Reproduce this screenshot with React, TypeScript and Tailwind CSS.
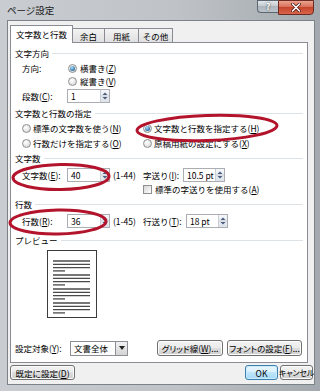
import React from "react";

function U({ children }: { children: React.ReactNode }) {
  return <span className="underline underline-offset-1">{children}</span>;
}

function Radio({ checked }: { checked?: boolean }) {
  return (
    <span className="relative inline-block h-[9px] w-[9px] shrink-0 rounded-full border border-[#8e8f8f] bg-[radial-gradient(circle_at_40%_35%,#ffffff,#e2e2e2_65%,#c9c9c9)]">
      {checked && (
        <span className="absolute left-[1px] top-[1px] h-[5px] w-[5px] rounded-full bg-[radial-gradient(circle_at_40%_35%,#b4e2fa,#2f76ad_65%,#1a4a76)]" />
      )}
    </span>
  );
}

function Check() {
  return (
    <span className="inline-block h-[9px] w-[9px] shrink-0 border border-[#8e8f8f] bg-[linear-gradient(135deg,#d6d6d6,#ffffff)]" />
  );
}

function SpinArrows() {
  return (
    <span className="flex h-full w-[9px] shrink-0 flex-col border-l border-[#c9ced6] bg-[linear-gradient(#f5f7fa,#dde3ea)]">
      <svg width="8" height="12" viewBox="0 0 8 12">
        <path d="M1.5 5 L4 2.5 L6.5 5Z" fill="#4b5d7d" />
        <line x1="0" y1="6" x2="8" y2="6" stroke="#c9ced6" strokeWidth="1" />
        <path d="M1.5 7 L4 9.5 L6.5 7Z" fill="#4b5d7d" />
      </svg>
    </span>
  );
}

function Spin({ value, className }: { value: string; className: string }) {
  return (
    <div className={`flex h-[14px] items-stretch border border-[#abadb3] bg-white ${className}`}>
      <span className="flex flex-1 items-center pl-[3px]">{value}</span>
      <SpinArrows />
    </div>
  );
}

function Header({ text }: { text: string }) {
  return (
    <div className="flex h-full items-center pl-[4px]">
      <span>{text}</span>
      <span className="ml-[3px] mr-[4px] h-px flex-1 bg-[#dde2e7]" />
    </div>
  );
}

function Btn({ children, className }: { children: React.ReactNode; className: string }) {
  return (
    <div
      className={`flex items-center justify-center whitespace-nowrap rounded-[3px] border border-[#707070] bg-[linear-gradient(#f2f2f2,#ebebeb_50%,#dddddd_50%,#cfcfcf)] shadow-[inset_0_0_0_1px_#fcfcfc] ${className}`}
    >
      {children}
    </div>
  );
}

function PreviewPage() {
  const groups = [10, 24, 38, 52];
  return (
    <div className="ml-[36px] mt-[2px] h-[68px] w-[50px] border border-[#3c3c3c] bg-white">
      <svg width="48" height="66" viewBox="0 0 48 66">
        {groups.map((g) => (
          <g key={g} stroke="#4a4a4a" strokeWidth="1.3">
            <line x1="5" y1={g} x2="42" y2={g} />
            <line x1="5" y1={g + 3.3} x2="42" y2={g + 3.3} />
            <line x1="5" y1={g + 6.6} x2="42" y2={g + 6.6} />
            <line x1="5" y1={g + 9.9} x2="17" y2={g + 9.9} />
          </g>
        ))}
      </svg>
    </div>
  );
}

export default function App() {
  return (
    <div className="relative flex h-[391px] w-[320px] flex-col overflow-hidden bg-[linear-gradient(to_right,#c9cdd1,#bfc3c7_55%,#a3a9ae)] font-['Noto_Sans_CJK_JP','Noto_Sans_CJK_SC',sans-serif] text-[8.5px] leading-[12px] text-black">
      {/* title bar */}
      <div className="flex h-[20px] shrink-0 items-start justify-between">
        <span className="pl-[7px] pt-[4px] text-[9.5px] leading-[12px] text-[#1a1a1a]">ページ設定</span>
        <div className="mr-[6px] flex items-start">
          <div className="flex h-[13px] w-[21px] items-center justify-center rounded-bl-[4px] border border-r-0 border-[#5d6670] bg-[linear-gradient(#e4e7ea,#c2c8ce_50%,#aeb5bc_50%,#bcc3ca)] text-[9px] font-bold text-white [text-shadow:0_0_2px_#222]">
            ?
          </div>
          <div className="flex h-[15px] w-[36px] items-center justify-center rounded-br-[4px] border border-[#6b2a22] bg-[linear-gradient(#eba390,#d66a52_50%,#c8452d_50%,#d7654a)]">
            <svg width="10" height="9" viewBox="0 0 10 9">
              <path d="M1.5 1 L8.5 8 M8.5 1 L1.5 8" stroke="#4a1a14" strokeWidth="3" strokeLinecap="round" />
              <path d="M1.5 1 L8.5 8 M8.5 1 L1.5 8" stroke="#ffffff" strokeWidth="1.6" strokeLinecap="round" />
            </svg>
          </div>
        </div>
      </div>

      {/* client area */}
      <div className="ml-[7px] flex h-[365px] w-[308px] flex-col border border-[#7c8288] bg-[#f0f0f0]">
        {/* tabs */}
        <div className="ml-[2px] mt-[4px] flex h-[18px] items-start">
          <div className="relative z-10 flex h-[18px] w-[63px] items-center justify-center border border-b-0 border-[#898c95] bg-white pb-[1px]">
            文字数と行数
          </div>
          <div className="mt-[3px] flex h-[15px] w-[32px] items-center justify-center border border-l-0 border-[#898c95] bg-[linear-gradient(#f3f3f3,#e0e0e0)]">
            余白
          </div>
          <div className="mt-[3px] flex h-[15px] w-[34px] items-center justify-center border border-l-0 border-[#898c95] bg-[linear-gradient(#f3f3f3,#e0e0e0)]">
            用紙
          </div>
          <div className="mt-[3px] flex h-[15px] w-[34px] items-center justify-center border border-l-0 border-[#898c95] bg-[linear-gradient(#f3f3f3,#e0e0e0)]">
            その他
          </div>
        </div>

        {/* panel */}
        <div className="relative z-0 -mt-px ml-[2px] flex h-[321px] w-[298px] flex-col border border-[#898c95] bg-white">
          <div className="mt-[3px] h-[14px]">
            <Header text="文字方向" />
          </div>
          <div className="flex h-[16px] items-center pl-[11px]">
            <span className="w-[46px]">方向:</span>
            <Radio checked />
            <span className="ml-[3px]">
              横書き(<U>Z</U>)
            </span>
          </div>
          <div className="flex h-[10px] items-center pl-[57px]">
            <Radio />
            <span className="ml-[3px]">
              縦書き(<U>V</U>)
            </span>
          </div>
          <div className="flex h-[20px] items-center pl-[11px]">
            <span className="w-[45px]">
              段数(<U>C</U>):
            </span>
            <Spin value="1" className="w-[43px]" />
          </div>
          <div className="h-[14px]">
            <Header text="文字数と行数の指定" />
          </div>
          <div className="flex h-[16px] items-center pl-[11px]">
            <div className="flex w-[121px] items-center">
              <Radio />
              <span className="ml-[2px]">
                標準の文字数を使う(<U>N</U>)
              </span>
            </div>
            <Radio checked />
            <span className="ml-[2px]">
              文字数と行数を指定する(<U>H</U>)
            </span>
          </div>
          <div className="flex h-[14px] items-center pl-[11px]">
            <div className="flex w-[121px] items-center">
              <Radio />
              <span className="ml-[2px]">
                行数だけを指定する(<U>O</U>)
              </span>
            </div>
            <Radio />
            <span className="ml-[2px]">
              原稿用紙の設定にする(<U>X</U>)
            </span>
          </div>
          <div className="h-[16px]">
            <Header text="文字数" />
          </div>
          <div className="flex h-[18px] items-center pl-[11px]">
            <span className="w-[45px]">
              文字数(<U>E</U>):
            </span>
            <Spin value="40" className="w-[43px]" />
            <span className="ml-[3px] w-[30px]">(1-44)</span>
            <span className="w-[40px]">
              字送り(<U>I</U>):
            </span>
            <Spin value="10.5 pt" className="w-[42px]" />
          </div>
          <div className="flex h-[10px] items-center pl-[132px]">
            <Check />
            <span className="ml-[3px]">
              標準の字送りを使用する(<U>A</U>)
            </span>
          </div>
          <div className="h-[20px]">
            <Header text="行数" />
          </div>
          <div className="flex h-[14px] items-center pl-[11px]">
            <span className="w-[45px]">
              行数(<U>R</U>):
            </span>
            <Spin value="36" className="w-[43px]" />
            <span className="ml-[3px] w-[30px]">(1-45)</span>
            <span className="w-[43px]">
              行送り(<U>T</U>):
            </span>
            <Spin value="18 pt" className="w-[42px]" />
          </div>
          <div className="mt-[4px] h-[16px]">
            <Header text="プレビュー" />
          </div>
          <PreviewPage />
          <div className="mt-[22px] flex h-[16px] items-center pl-[4px]">
            <span className="w-[55px]">
              設定対象(<U>Y</U>):
            </span>
            <div className="flex h-[15px] w-[58px] items-stretch border border-[#8d8f94] bg-white">
              <span className="flex flex-1 items-center pl-[3px]">文書全体</span>
              <span className="flex w-[12px] items-center justify-center border-l border-[#8d8f94] bg-[linear-gradient(#f2f2f2,#d4d4d4)]">
                <svg width="6" height="4" viewBox="0 0 6 4">
                  <path d="M0 0 L6 0 L3 4Z" fill="#222" />
                </svg>
              </span>
            </div>
            <Btn className="ml-[29px] h-[16px] w-[66px] [font-feature-settings:'palt']">
              グリッド線(<U>W</U>)...
            </Btn>
            <Btn className="ml-[4px] h-[16px] w-[75px] [font-feature-settings:'palt']">
              フォントの設定(<U>F</U>)...
            </Btn>
          </div>
        </div>

        {/* bottom buttons */}
        <div className="mt-[2px] flex items-center">
          <Btn className="ml-[2px] h-[15px] w-[65px]">
            既定に設定(<U>D</U>)
          </Btn>
          <div className="ml-auto flex h-[15px] w-[33px] items-center justify-center rounded-[3px] border border-[#3c7fb1] bg-[linear-gradient(#eaf6fd,#d9f0fc_50%,#bee6fd_50%,#a7d9f5)] shadow-[inset_0_0_0_1px_#c8ecfc]">
            OK
          </div>
          <Btn className="ml-[2px] mr-[1px] h-[15px] w-[33px] text-[8px] tracking-[-0.2px] [font-feature-settings:'palt']">
            キャンセル
          </Btn>
        </div>
      </div>

      {/* red annotation ellipses */}
      <svg
        className="pointer-events-none absolute left-0 top-0 z-20"
        width="320"
        height="391"
        viewBox="0 0 320 391"
      >
        <g fill="none" stroke="#b3132b" strokeWidth="3">
          <ellipse cx="207" cy="128" rx="70" ry="12.5" transform="rotate(-2 207 128)" />
          <ellipse cx="61" cy="177" rx="48" ry="12.5" transform="rotate(-1 61 177)" />
          <ellipse cx="58" cy="222" rx="48" ry="12" transform="rotate(-1 58 222)" />
        </g>
      </svg>
    </div>
  );
}
